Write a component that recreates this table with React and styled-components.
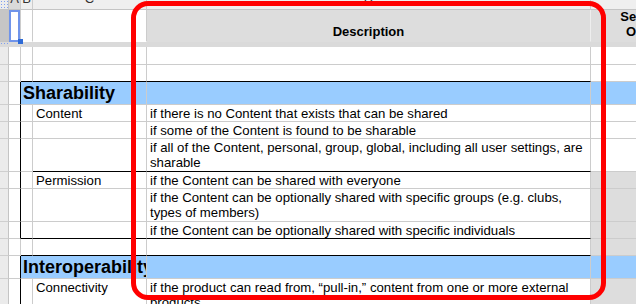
import styled, { createGlobalStyle } from 'styled-components';

const GRID = '#cccccc';
const INK = '#000000';
const BLUE = '#99ccff';
const SHADE = '#dddddd';
const COLS = '9px 12px 12px 114px 444px 113px';

const sections = [
    {
        title: 'Sharability',
        items: [
            {
                label: 'Content',
                shade: false,
                lines: [
                    { text: 'if there is no Content that exists that can be shared' },
                    { text: 'if some of the Content is found to be sharable' },
                    { text: 'if all of the Content, personal, group, global, including all user settings, are sharable', tall: true },
                ],
            },
            {
                label: 'Permission',
                shade: true,
                lines: [
                    { text: 'if the Content can be shared with everyone' },
                    { text: 'if the Content can be optionally shared with specific groups (e.g. clubs, types of members)', tall: true },
                    { text: 'if the Content can be optionally shared with specific individuals' },
                ],
            },
        ],
    },
    {
        title: 'Interoperability',
        items: [
            {
                label: 'Connectivity',
                shade: true,
                lines: [
                    { text: 'if the product can read from, \u201Cpull-in,\u201D content from one or more external products', tall: true },
                ],
            },
        ],
    },
];

function SectionRows({ section }) {
    const rows = [
        <Row key="title" $h={23}>
            <RowHead />
            <Cell $right={INK} />
            <Cell $span={2} $fill={BLUE} $pl={2}>
                <TitleText>{section.title}</TitleText>
            </Cell>
            <Cell $fill={BLUE} />
            <Cell $fill={BLUE} />
        </Row>,
    ];

    section.items.forEach((item, i) => {
        item.lines.forEach((line, j) => {
            const lastOfItem = j === item.lines.length - 1;
            const lastOfSection = lastOfItem && i === section.items.length - 1;
            rows.push(
                <Row key={`${i}-${j}`} $h={line.tall ? 33 : 17}>
                    <RowHead />
                    <Cell $right={INK} />
                    <Cell $bottom={lastOfSection ? INK : GRID} />
                    <LabelCell $bottom={lastOfItem ? INK : GRID}>
                        {j === 0 && <BodyText>{item.label}</BodyText>}
                    </LabelCell>
                    <Cell $bottom={lastOfItem ? INK : GRID} $pb={line.tall ? 1 : 0}>
                        <BodyText $tall={line.tall}>{line.text}</BodyText>
                    </Cell>
                    <Cell $fill={item.shade ? SHADE : '#fff'} />
                </Row>
            );
        });
    });

    return rows;
}

function BlankRow({ h, capBelow, shade }) {
    const edge = capBelow ? INK : GRID;
    return (
        <Row $h={h}>
            <RowHead />
            <Cell />
            <Cell $bottom={edge} />
            <Cell $bottom={edge} />
            <Cell $bottom={edge} />
            <Cell $fill={shade ? SHADE : '#fff'} />
        </Row>
    );
}

function App() {
    return (
        <>
            <GlobalStyle />
            <Sheet>
                <Row $h={10}>
                    <Corner />
                    <Letter $active>A</Letter>
                    <Letter>B</Letter>
                    <Letter>C</Letter>
                    <Letter>D</Letter>
                    <Letter>E</Letter>
                </Row>

                <Row $h={32}>
                    <RowHead $active $flat />
                    <SelectedCell $bottom="transparent" />
                    <Cell $bottom="transparent" />
                    <Cell $bottom="transparent" />
                    <Cell $bottom="transparent" $fill={SHADE} $right="#eeeeee" $center $pb={2}>
                        <HeaderText>Description</HeaderText>
                    </Cell>
                    <Cell $bottom="transparent" $fill={SHADE} $center $pb={2}>
                        <HeaderText>Selected<br />Option</HeaderText>
                    </Cell>
                </Row>

                <FreezeBar>
                    <FrozenDots />
                </FreezeBar>

                <BlankRow h={18} />
                <BlankRow h={17} capBelow />
                <SectionRows section={sections[0]} />
                <BlankRow h={17} capBelow shade />
                <SectionRows section={sections[1]} />

                <Annotation />
            </Sheet>
        </>
    );
}

const GlobalStyle = createGlobalStyle`
  html, body {
    margin: 0;
    padding: 0;
    background: #ffffff;
    overflow: hidden;
  }
  body {
    font-family: 'Liberation Sans', Arial, sans-serif;
    font-size: 13px;
    color: #000000;
  }
`;

const Sheet = styled.div`
  position: relative;
  width: 636px;
  height: 304px;
  overflow: hidden;
  background: #ffffff;
`;

const Row = styled.div`
  display: grid;
  grid-template-columns: ${COLS};
  height: ${p => p.$h}px;
`;

const Cell = styled.div`
  box-sizing: border-box;
  min-width: 0;
  grid-column: span ${p => p.$span || 1};
  display: flex;
  align-items: flex-end;
  justify-content: ${p => (p.$center ? 'center' : 'flex-start')};
  overflow: hidden;
  padding: 0 3px ${p => p.$pb || 0}px ${p => (p.$pl ?? 3)}px;
  border-right: 1px solid ${p => p.$right || GRID};
  border-bottom: 1px solid ${p => p.$bottom || GRID};
  background: ${p => p.$fill || '#ffffff'};
`;

const LabelCell = styled(Cell)`
  align-items: flex-start;
  padding-top: 1px;

  span {
    line-height: 15px;
  }
`;

const SelectedCell = styled(Cell)`
  position: relative;
  overflow: visible;
  z-index: 2;

  &::before {
    content: '';
    position: absolute;
    inset: 0 0 -1px 0;
    border: 2px solid #7094ea;
  }

  &::after {
    content: '';
    position: absolute;
    left: 9px;
    top: 29px;
    width: 5px;
    height: 5px;
    background: #2f6bd6;
  }
`;

const RowHead = styled.div`
  box-sizing: border-box;
  background: ${p => (p.$active ? '#c6c6c6' : '#ebebeb')};
  border-right: 1px solid #c4c4c4;
  border-bottom: 1px solid ${p => (p.$flat ? 'transparent' : '#cfcfcf')};
`;

const Corner = styled.div`
  box-sizing: border-box;
  background-color: #ececec;
  background-image: radial-gradient(#7f9ff0 0.8px, transparent 1px);
  background-size: 3px 3px;
  border-right: 1px solid #c4c4c4;
  border-bottom: 1px solid #c4c4c4;
`;

const Letter = styled.div`
  box-sizing: border-box;
  display: flex;
  align-items: flex-end;
  justify-content: center;
  overflow: hidden;
  padding-bottom: 3px;
  font-size: 13px;
  line-height: 15px;
  color: #333333;
  background: ${p => (p.$active ? '#dadada' : '#efefef')};
  border-right: 1px solid #cccccc;
  border-bottom: 1px solid #c4c4c4;
`;

const FreezeBar = styled.div`
  height: 5px;
  background: #dadada;
  display: flex;
`;

const FrozenDots = styled.div`
  width: 8px;
  height: 3px;
  background-image: radial-gradient(#7f9ff0 0.8px, transparent 1px);
  background-size: 3px 3px;
`;

const HeaderText = styled.span`
  font-weight: bold;
  line-height: 15px;
  text-align: center;
`;

const TitleText = styled.span`
  font-size: 18px;
  font-weight: bold;
  line-height: 22px;
  white-space: nowrap;
`;

const BodyText = styled.span`
  font-size: 13.2px;
  line-height: ${p => (p.$tall ? 15 : 14)}px;
`;

const Annotation = styled.div`
  position: absolute;
  left: 131px;
  top: 1px;
  width: 475px;
  height: 299px;
  box-sizing: border-box;
  border: 5px solid #ff0000;
  border-radius: 17px;
  pointer-events: none;
  z-index: 5;
`;

export default App;
